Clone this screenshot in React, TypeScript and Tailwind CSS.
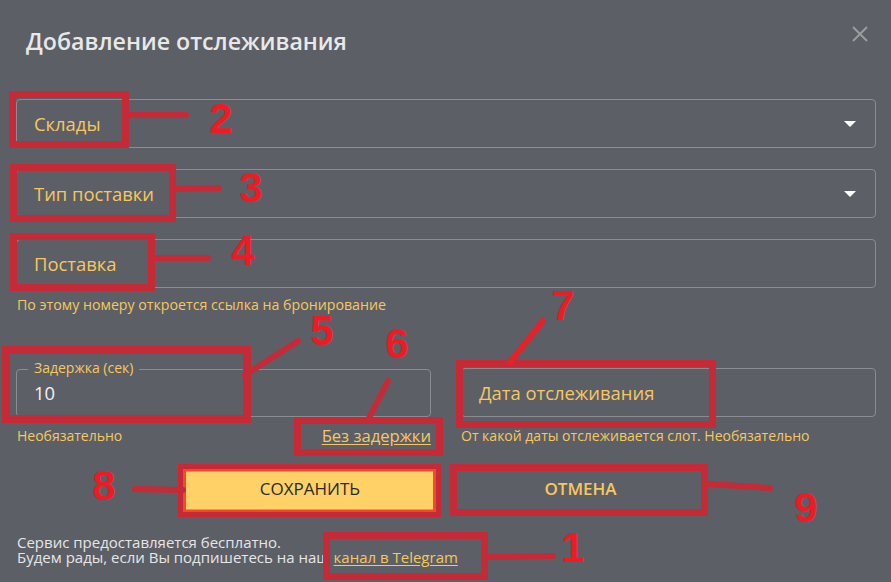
import React from "react";

const Y = "text-[#f6c85f]";

function Caret() {
  return (
    <svg width="12" height="6" viewBox="0 0 12 6" className="block">
      <path d="M0 0 L12 0 L6 6 Z" fill="#ffffff" />
    </svg>
  );
}

function Annotations() {
  const box = "#c62a36";
  const num = "#ec1c24";
  const rects: [number, number, number, number, number][] = [
    [12.5, 94.5, 113, 50, 7],
    [13.5, 167.5, 159, 51, 7],
    [13.5, 236.5, 138, 51, 7],
    [6, 350, 241, 69, 8],
    [297.5, 420.5, 142, 32, 7],
    [459.5, 363.5, 253, 61, 7],
    [180.5, 466.5, 258, 48, 5],
    [453.5, 467.5, 251, 45, 7],
    [326.5, 535.5, 158, 41, 7],
  ];
  const lines: [number, number, number, number, string][] = [
    [129, 115, 186, 115, box],
    [176, 189, 219, 188, box],
    [155, 258, 208, 258, box],
    [245, 375, 298, 341, box],
    [368, 420, 388, 381, box],
    [510, 362, 543, 321, "#e1232b"],
    [135, 489, 183, 490, box],
    [708, 484, 770, 488, box],
    [488, 557, 553, 556, box],
  ];
  const nums: [string, number, number][] = [
    ["2", 221, 133],
    ["3", 251, 202],
    ["4", 243, 265],
    ["5", 322, 345],
    ["6", 397, 358],
    ["7", 563, 320],
    ["8", 104, 500],
    ["9", 806, 522],
    ["1", 573, 562],
  ];
  return (
    <svg
      width="891"
      height="582"
      viewBox="0 0 891 582"
      className="absolute left-0 top-0 pointer-events-none"
    >
      <rect x={184.5} y={470} width={250} height={41} fill="none" stroke="#f24a2e" strokeWidth={3} />
      {rects.map(([x, y, w, h, s], i) => (
        <rect key={i} x={x} y={y} width={w} height={h} fill="none" stroke={box} strokeWidth={s} />
      ))}
      {lines.map(([x1, y1, x2, y2, c], i) => (
        <line key={i} x1={x1} y1={y1} x2={x2} y2={y2} stroke={c} strokeWidth={6} strokeLinecap="round" />
      ))}
      {nums.map(([t, x, y], i) => (
        <text
          key={i}
          x={x}
          y={y}
          textAnchor="middle"
          fill={num}
          fontFamily="'Liberation Sans', Arial, sans-serif"
          fontWeight="bold"
          fontSize="42"
        >
          {t}
        </text>
      ))}
    </svg>
  );
}

export default function App() {
  return (
    <div className="relative w-[891px] h-[582px] overflow-hidden bg-[#5c5f66] font-['Open_Sans',sans-serif]">
      <div className="flex justify-between h-[82px] pl-[26px] pr-[23px]">
        <h2 className="self-center text-[23.2px] font-semibold text-[#e8e8e8]">
          Добавление отслеживания
        </h2>
        <button className="self-start mt-[26px]">
          <svg width="16" height="16" viewBox="0 0 16 16" className="block">
            <path d="M1 1 L15 15 M15 1 L1 15" stroke="#9c9c9c" strokeWidth="2" />
          </svg>
        </button>
      </div>

      <div className="pl-4 pr-[15px] mt-[17px] flex flex-col">
        <div className="h-[49px] border border-[#8a8c91] rounded-[4px] flex items-center justify-between pl-[17px] pr-[19px]">
          <span className={`text-[18.4px] ${Y}`}>Склады</span>
          <Caret />
        </div>
        <div className="mt-[21px] h-[49px] border border-[#8a8c91] rounded-[4px] flex items-center justify-between pl-[17px] pr-[19px]">
          <span className={`text-[18.4px] ${Y}`}>Тип поставки</span>
          <Caret />
        </div>
        <div className="mt-[21px] h-[49px] border border-[#8a8c91] rounded-[4px] flex items-center pl-[17px]">
          <span className={`text-[18.4px] ${Y}`}>Поставка</span>
        </div>
        <div className={`mt-[8px] text-[14.2px] leading-[18px] pl-px ${Y}`}>
          По этому номеру откроется ссылка на бронирование
        </div>

        <div className="mt-[54px] grid grid-cols-2 gap-[30px] items-end">
          <div className="relative h-[48px] border border-[#8a8c91] rounded-[4px] flex items-center pl-[17px]">
            <span className={`absolute left-[11px] top-[-10px] px-[6px] bg-[#5c5f66] text-[14px] leading-[16px] ${Y}`}>
              Задержка (сек)
            </span>
            <span className="text-[18.4px] text-[#f2f2f2]">10</span>
          </div>
          <div className="h-[49px] border border-[#8a8c91] rounded-[4px] flex items-center pl-[17px]">
            <span className={`text-[18.4px] ${Y}`}>Дата отслеживания</span>
          </div>
        </div>

        <div className="mt-[10px] grid grid-cols-2 gap-[30px]">
          <div className="flex justify-between items-center pl-px">
            <span className={`text-[14px] leading-[18px] ${Y}`}>Необязательно</span>
            <a className={`text-[16.6px] leading-[18px] underline underline-offset-2 ${Y}`}>Без задержки</a>
          </div>
          <div className={`text-[14px] leading-[18px] ${Y}`}>
            От какой даты отслеживается слот. Необязательно
          </div>
        </div>
      </div>

      <div className="mt-[20px] flex justify-center gap-[22px]">
        <button className="w-[248px] h-[48px] rounded-[4px] bg-[#ffd166] text-[17px] font-medium text-[#2a2a2a]">
          СОХРАНИТЬ
        </button>
        <button className="w-[249px] h-[48px] rounded-[4px] border border-[#d8a14f] text-[17px] font-semibold text-[#f6c85f]">
          ОТМЕНА
        </button>
      </div>

      <div className="mt-[22px] pl-[17px] text-[15px] leading-[15px] text-[#e6e6e6]">
        <div>Сервис предоставляется бесплатно.</div>
        <div>
          Будем рады, если Вы подпишетесь на наш{" "}
          <a className={`underline underline-offset-2 ${Y}`}>канал в Telegram</a>
        </div>
      </div>

      <Annotations />
    </div>
  );
}
